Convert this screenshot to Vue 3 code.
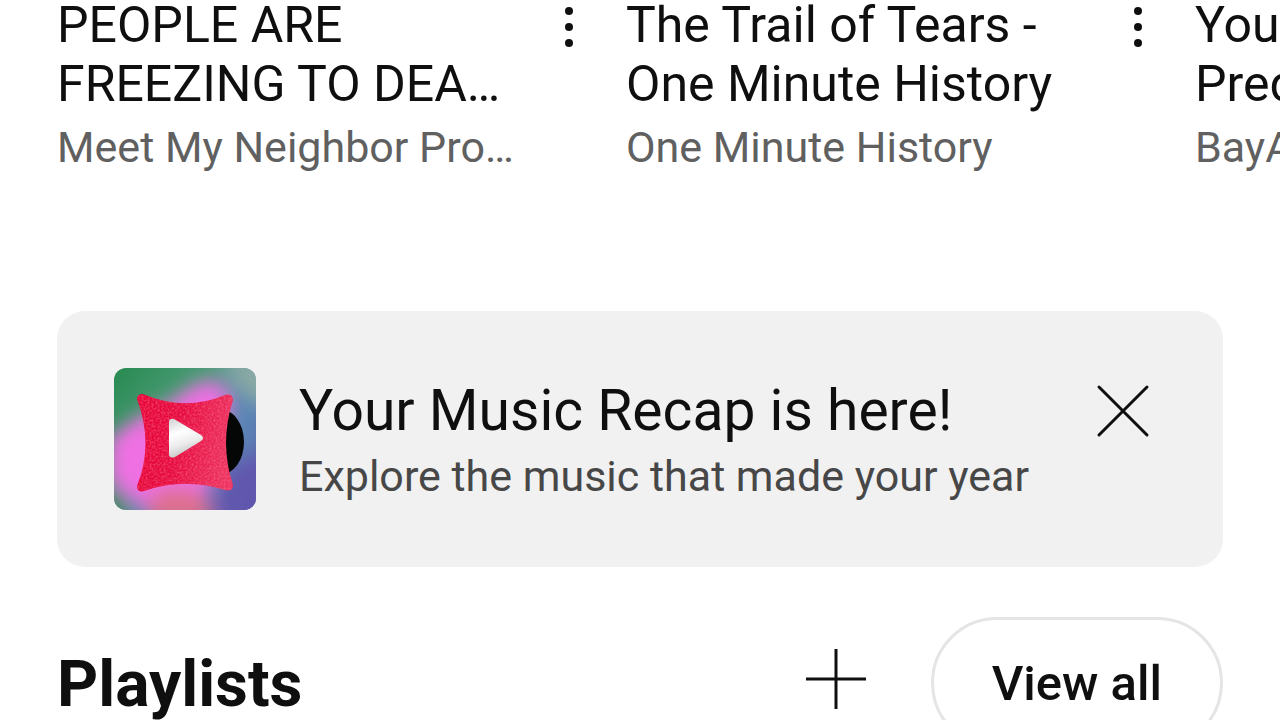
<script setup>
const videos = [
  { lines: ['PEOPLE ARE', 'FREEZING TO DEA…'], channel: 'Meet My Neighbor Pro…' },
  { lines: ['The Trail of Tears -', 'One Minute History'], channel: 'One Minute History' },
  { lines: ['Your', 'Predictions'], channel: 'BayArea' },
]
</script>

<template>
  <main class="page">
    <section class="shelf" aria-label="History">
      <article v-for="video in videos" :key="video.channel" class="video">
        <div class="video-text">
          <h3 class="video-title">
            <span v-for="line in video.lines" :key="line" class="line">{{ line }}</span>
          </h3>
          <p class="channel">{{ video.channel }}</p>
        </div>
        <button class="icon-button menu" type="button" aria-label="More options">
          <svg width="12" height="44" viewBox="0 0 12 44">
            <circle cx="6" cy="6" r="4" />
            <circle cx="6" cy="22" r="4" />
            <circle cx="6" cy="38" r="4" />
          </svg>
        </button>
      </article>
    </section>

    <section class="banner">
      <svg class="thumb" viewBox="0 0 142 142" aria-hidden="true">
        <defs>
          <linearGradient id="base" x1="0" y1="0" x2="1" y2="0.9">
            <stop offset="0" stop-color="#278a50" />
            <stop offset="0.38" stop-color="#4c9c78" />
            <stop offset="0.65" stop-color="#5b86b4" />
            <stop offset="1" stop-color="#6157ad" />
          </linearGradient>
          <linearGradient id="cushion" x1="0" y1="0" x2="1" y2="0.2">
            <stop offset="0" stop-color="#e60336" />
            <stop offset="0.5" stop-color="#e60a3e" />
            <stop offset="1" stop-color="#ec315e" />
          </linearGradient>
          <linearGradient id="play" x1="0.2" y1="0" x2="0.5" y2="1">
            <stop offset="0" stop-color="#d6d6d6" />
            <stop offset="0.35" stop-color="#ffffff" />
            <stop offset="0.65" stop-color="#ececec" />
            <stop offset="1" stop-color="#bdbdbd" />
          </linearGradient>
          <filter id="soft" x="-50%" y="-50%" width="200%" height="200%">
            <feGaussianBlur stdDeviation="9" />
          </filter>
          <filter id="fuzz" x="-5%" y="-5%" width="110%" height="110%" color-interpolation-filters="sRGB">
            <feTurbulence type="fractalNoise" baseFrequency="0.5" numOctaves="2" seed="4" result="noise" />
            <feColorMatrix in="noise" type="matrix" values="0 0 0 0 1  0 0 0 0 0.5  0 0 0 0 0.62  1 0 0 0 -0.36" result="specks" />
            <feComposite in="specks" in2="SourceAlpha" operator="in" result="texture" />
            <feMerge>
              <feMergeNode in="SourceGraphic" />
              <feMergeNode in="texture" />
            </feMerge>
          </filter>
        </defs>
        <rect width="142" height="142" fill="url(#base)" />
        <g filter="url(#soft)">
          <path d="M106 -12H160V40Q125 36 106 -12Z" fill="#89a9a5" />
          <path d="M-5 72Q20 48 54 36Q80 14 98 12Q118 20 112 48L90 142H32Q8 128 -5 110Z" fill="#ee70e2" />
          <path d="M112 12Q145 40 138 82L118 72Z" fill="#5a86b5" />
          <path d="M36 128Q62 112 92 128L100 156H34Z" fill="#dd708d" />
          <path d="M-12 118Q6 122 15 156H-12Z" fill="#27844e" />
          <path d="M116 104L160 84V160H100Z" fill="#6157ad" />
        </g>
        <ellipse cx="106" cy="74" rx="24" ry="33" fill="#050707" />
        <path
          d="M23 31Q23 26 29 26Q71 44 111 27Q118 25 119 32Q105 75 119 117Q119 124 111 122Q70 109 30 123Q23 125 23 118Q40 76 23 31Z"
          fill="url(#cushion)"
          filter="url(#fuzz)"
        />
        <path d="M55 54Q55 50 60 51L87 67Q91 70 87 73L61 89Q55 91 55 86Z" fill="url(#play)" />
      </svg>
      <div class="banner-text">
        <h2 class="banner-title">Your Music Recap is here!</h2>
        <p class="banner-note">Explore the music that made your year</p>
      </div>
      <button class="icon-button close" type="button" aria-label="Dismiss">
        <svg width="54" height="54" viewBox="0 0 54 54">
          <path d="M3 3L51 51M51 3L3 51" />
        </svg>
      </button>
    </section>

    <section class="playlists">
      <h2 class="heading">Playlists</h2>
      <button class="icon-button add" type="button" aria-label="New playlist">
        <svg width="62" height="62" viewBox="0 0 62 62">
          <path d="M31 1V61M1 31H61" />
        </svg>
      </button>
      <button class="view-all" type="button">View all</button>
    </section>
  </main>
</template>

<style>
body {
  margin: 0;
  background: #fff;
}
</style>

<style scoped>
.page {
  box-sizing: border-box;
  height: 100vh;
  overflow: hidden;
  padding: 0 57px;
  background: #fff;
  color: #0f0f0f;
  font-family: Roboto, sans-serif;
}

h2,
h3,
p {
  margin: 0;
  font-weight: 400;
}

button {
  font: inherit;
  color: inherit;
  cursor: pointer;
}

.shelf {
  display: flex;
  gap: 28px;
  margin-top: -4px;
}

.video {
  display: flex;
  flex: 0 0 541px;
  align-items: flex-start;
  justify-content: space-between;
}

.video-text {
  white-space: nowrap;
}

.video-title {
  font-size: 50px;
  line-height: 59px;
}

.line {
  display: block;
}

.channel {
  margin-top: 8px;
  font-size: 43px;
  line-height: 50px;
  color: #606060;
}

.icon-button {
  display: flex;
  flex: none;
  align-items: center;
  justify-content: center;
  padding: 0;
  border: 0;
  background: none;
}

.icon-button path {
  fill: none;
  stroke: #0f0f0f;
  stroke-width: 3;
}

.menu {
  width: 58px;
  height: 62px;
}

.menu svg {
  fill: #0f0f0f;
}

.banner {
  display: flex;
  align-items: center;
  gap: 43px;
  margin-top: 139px;
  padding: 57px;
  border-radius: 28px;
  background: #f1f1f1;
}

.thumb {
  flex: none;
  width: 142px;
  height: 142px;
  border-radius: 12px;
}

.banner-text {
  flex: 1;
  white-space: nowrap;
}

.banner-title {
  font-size: 57px;
  line-height: 75px;
}

.banner-note {
  font-size: 43px;
  line-height: 57px;
  color: #474747;
}

.close {
  align-self: flex-start;
  width: 86px;
  height: 86px;
}

.close path {
  stroke-linecap: round;
}

.playlists {
  display: flex;
  align-items: flex-start;
  margin-top: 50px;
}

.heading {
  flex: 1;
  font-size: 64px;
  line-height: 136px;
  font-weight: 700;
}

.add {
  width: 86px;
  height: 124px;
  margin-right: 52px;
}

.view-all {
  height: 132px;
  padding: 0 58px;
  border: 3px solid #e5e5e5;
  border-radius: 66px;
  background: #fff;
  font-size: 49px;
  font-weight: 500;
}
</style>
